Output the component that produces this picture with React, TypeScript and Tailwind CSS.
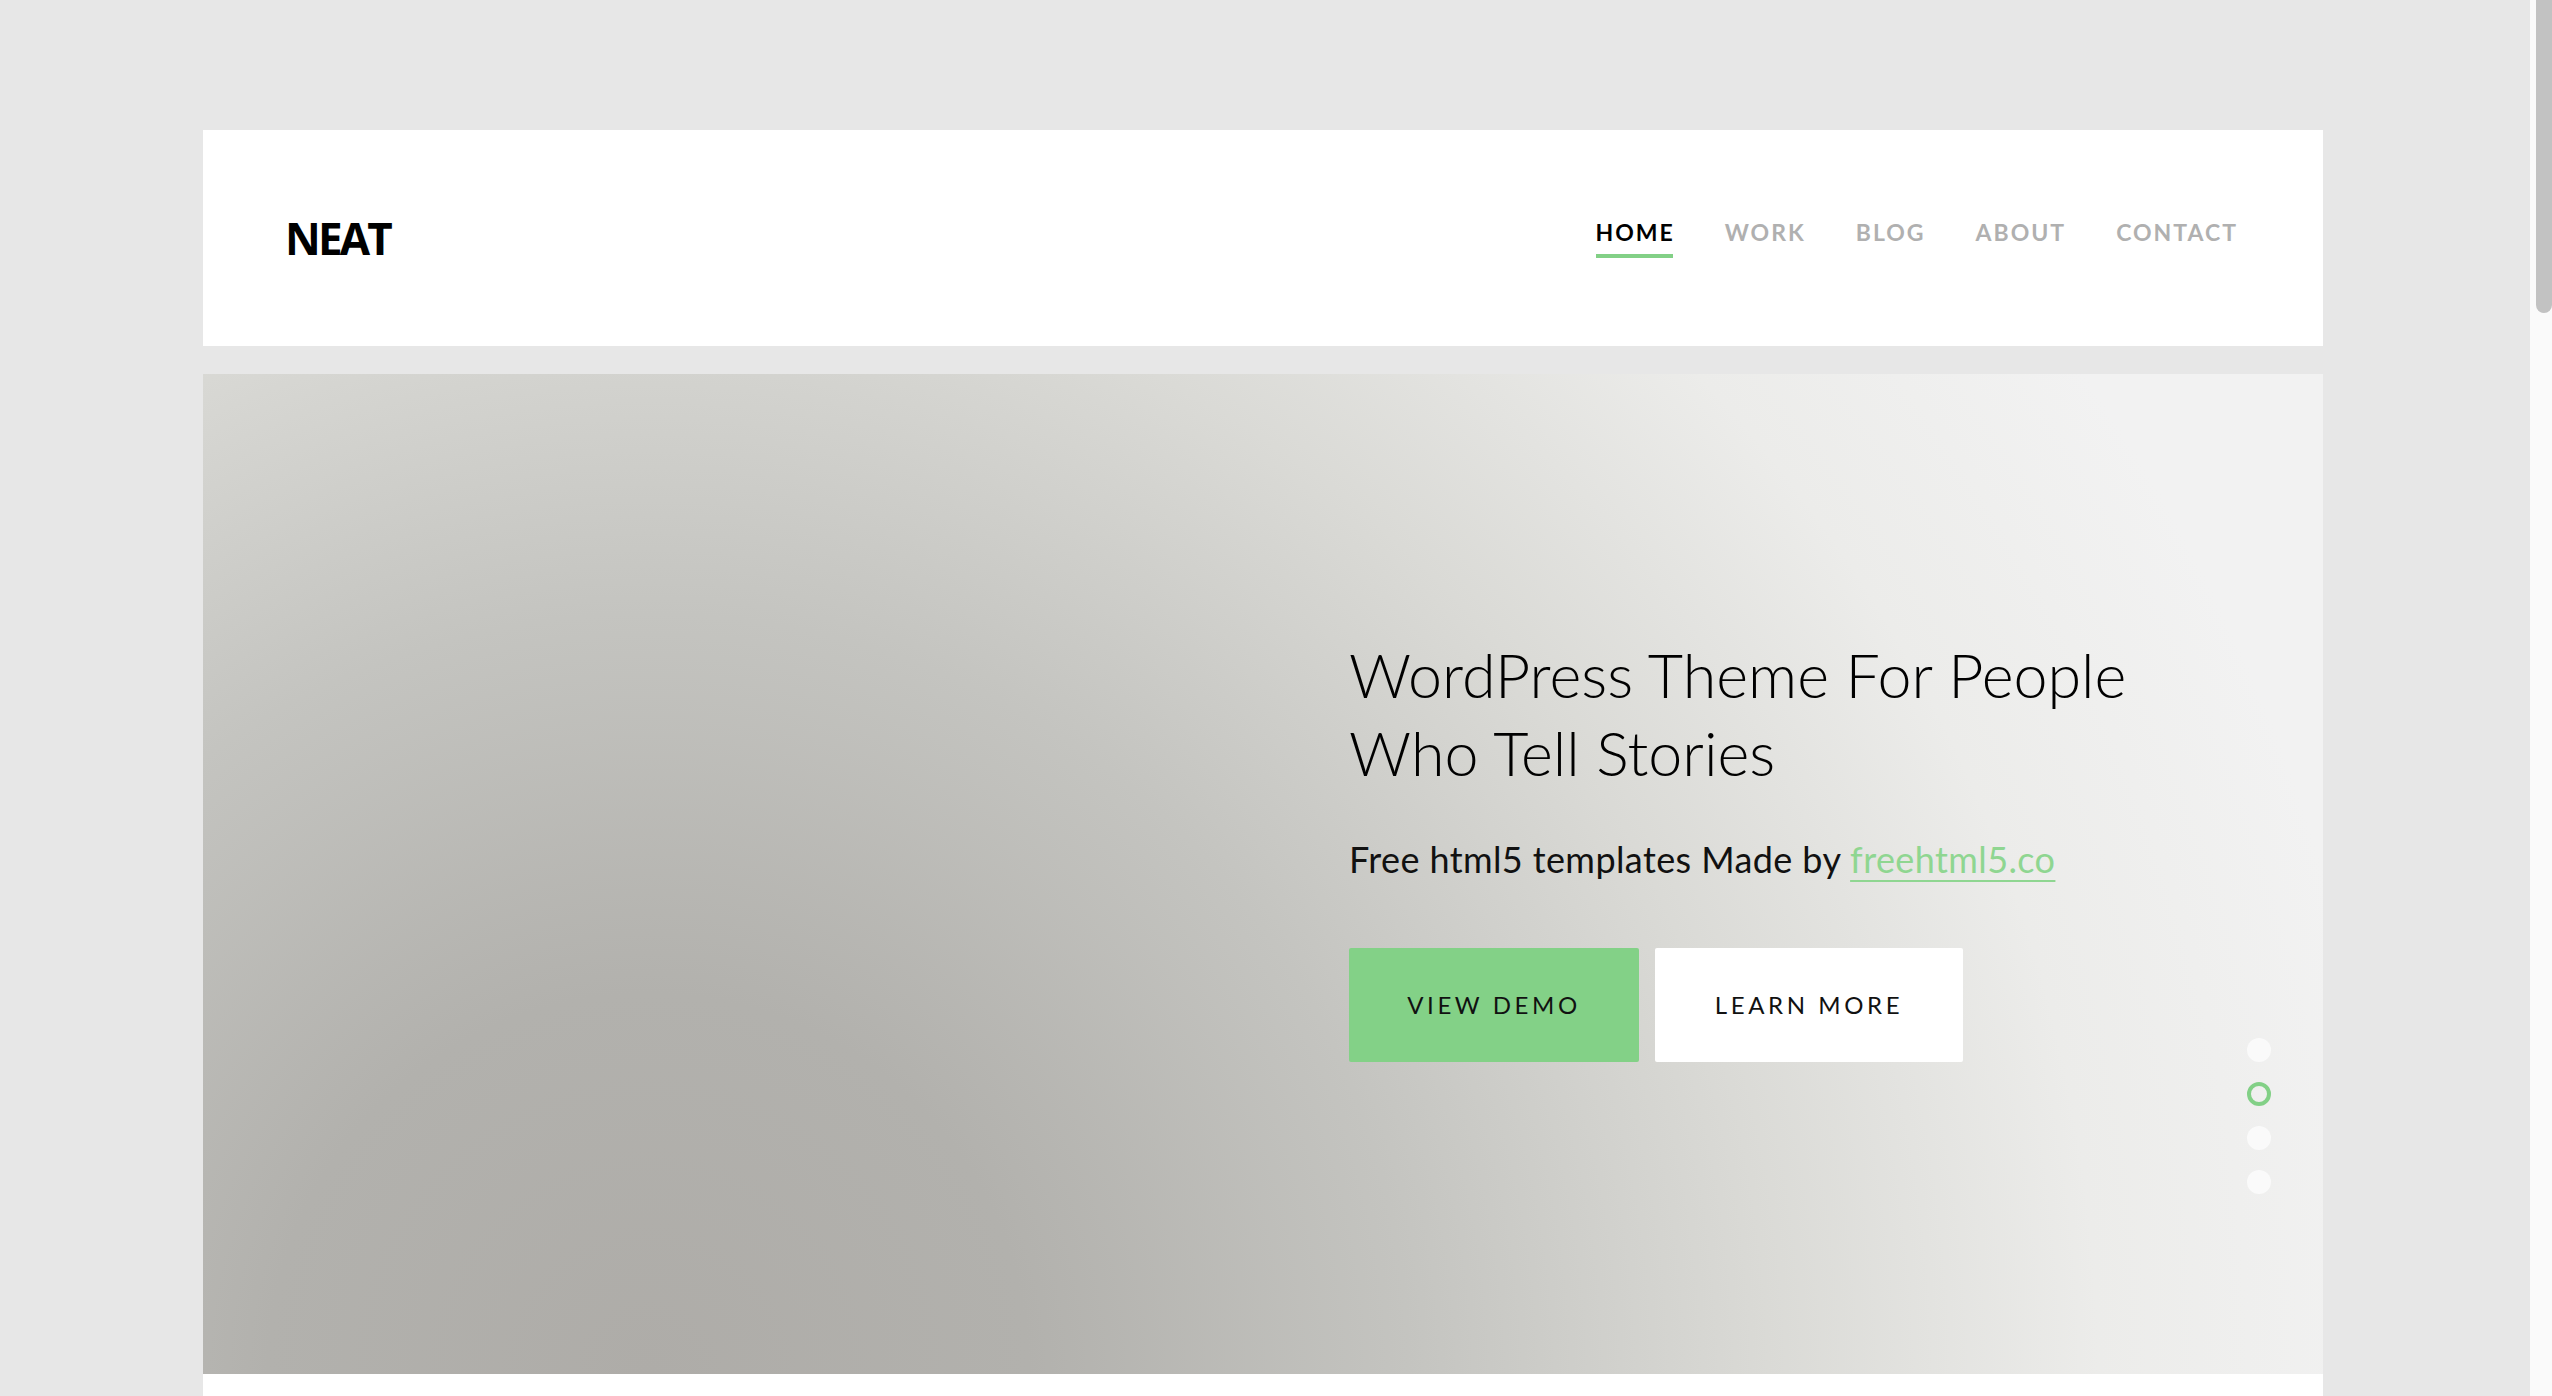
const nav = ["HOME", "WORK", "BLOG", "ABOUT", "CONTACT"];

function Header() {
  return (
    <header className="bg-white h-[216px] flex items-center justify-between pl-[82px] pr-[85px]">
      <div className="font-['Open_Sans',sans-serif] font-bold text-[44px] tracking-[-2.8px] text-black leading-none">
        NEAT
      </div>
      <nav className="flex gap-[50px] mt-[3px]">
        {nav.map((item, i) => (
          <a
            key={item}
            href="#"
            className={
              "flex flex-col font-['Lato',sans-serif] font-bold text-[23px] tracking-[2px] leading-none " +
              (i === 0 ? "text-black" : "text-[#b0b0b0]")
            }
          >
            <span>{item}</span>
            {i === 0 ? (
              <span className="mt-[10px] h-[4px] bg-[#82d086] mr-[2px]" />
            ) : (
              <span className="mt-[10px] h-[4px]" />
            )}
          </a>
        ))}
      </nav>
    </header>
  );
}

function Hero() {
  return (
    <section className="relative h-[1000px] mt-[28px] pl-[1146px] pt-[262px] bg-[radial-gradient(circle_at_21%_100%,#aeaca8_0px,#b2b1ad_380px,#c4c4c0_760px,#dadad6_1120px,#ececea_1450px,#f2f2f2_1750px)]">
      <h1 className="font-['Lato',sans-serif] font-light text-[61px] leading-[78px] text-black">
        WordPress Theme For People
        <br />
        Who Tell Stories
      </h1>
      <p className="mt-[43px] font-['Lato',sans-serif] text-[36px] tracking-[0.4px] leading-[48px] text-[#111]">
        Free html5 templates Made by{" "}
        <a href="#" className="text-[#8fd691] underline decoration-[2px] underline-offset-[7px]">
          freehtml5.co
        </a>
      </p>
      <div className="mt-[65px] flex gap-[16px]">
        <a
          href="#"
          className="w-[290px] h-[114px] rounded-[2px] bg-[#83d187] flex items-center justify-center font-['Lato',sans-serif] text-[24px] tracking-[3.6px] text-[#111]"
        >
          VIEW DEMO
        </a>
        <a
          href="#"
          className="w-[308px] h-[114px] rounded-[2px] bg-white flex items-center justify-center font-['Lato',sans-serif] text-[24px] tracking-[3.6px] text-[#111]"
        >
          LEARN MORE
        </a>
      </div>
      <div className="absolute right-[52px] top-[664px] flex flex-col gap-[20px]">
        <span className="w-[24px] h-[24px] rounded-full bg-[#fafafa]" />
        <span className="w-[24px] h-[24px] rounded-full border-[4px] border-[#82d086]" />
        <span className="w-[24px] h-[24px] rounded-full bg-[#fafafa]" />
        <span className="w-[24px] h-[24px] rounded-full bg-[#fafafa]" />
      </div>
    </section>
  );
}

export default function App() {
  return (
    <div className="h-[1396px] w-full flex overflow-hidden">
      <main className="flex-1 bg-[#e7e7e7] pt-[130px] pl-[203px]">
        <div className="w-[2120px]">
          <Header />
          <Hero />
          <div className="bg-white h-[200px]" />
        </div>
      </main>
      <aside className="w-[22px] bg-[#fafafa] pl-[6px]">
        <div className="h-[313px] w-[16px] bg-[#c2c2c2] rounded-b-full" />
      </aside>
    </div>
  );
}
